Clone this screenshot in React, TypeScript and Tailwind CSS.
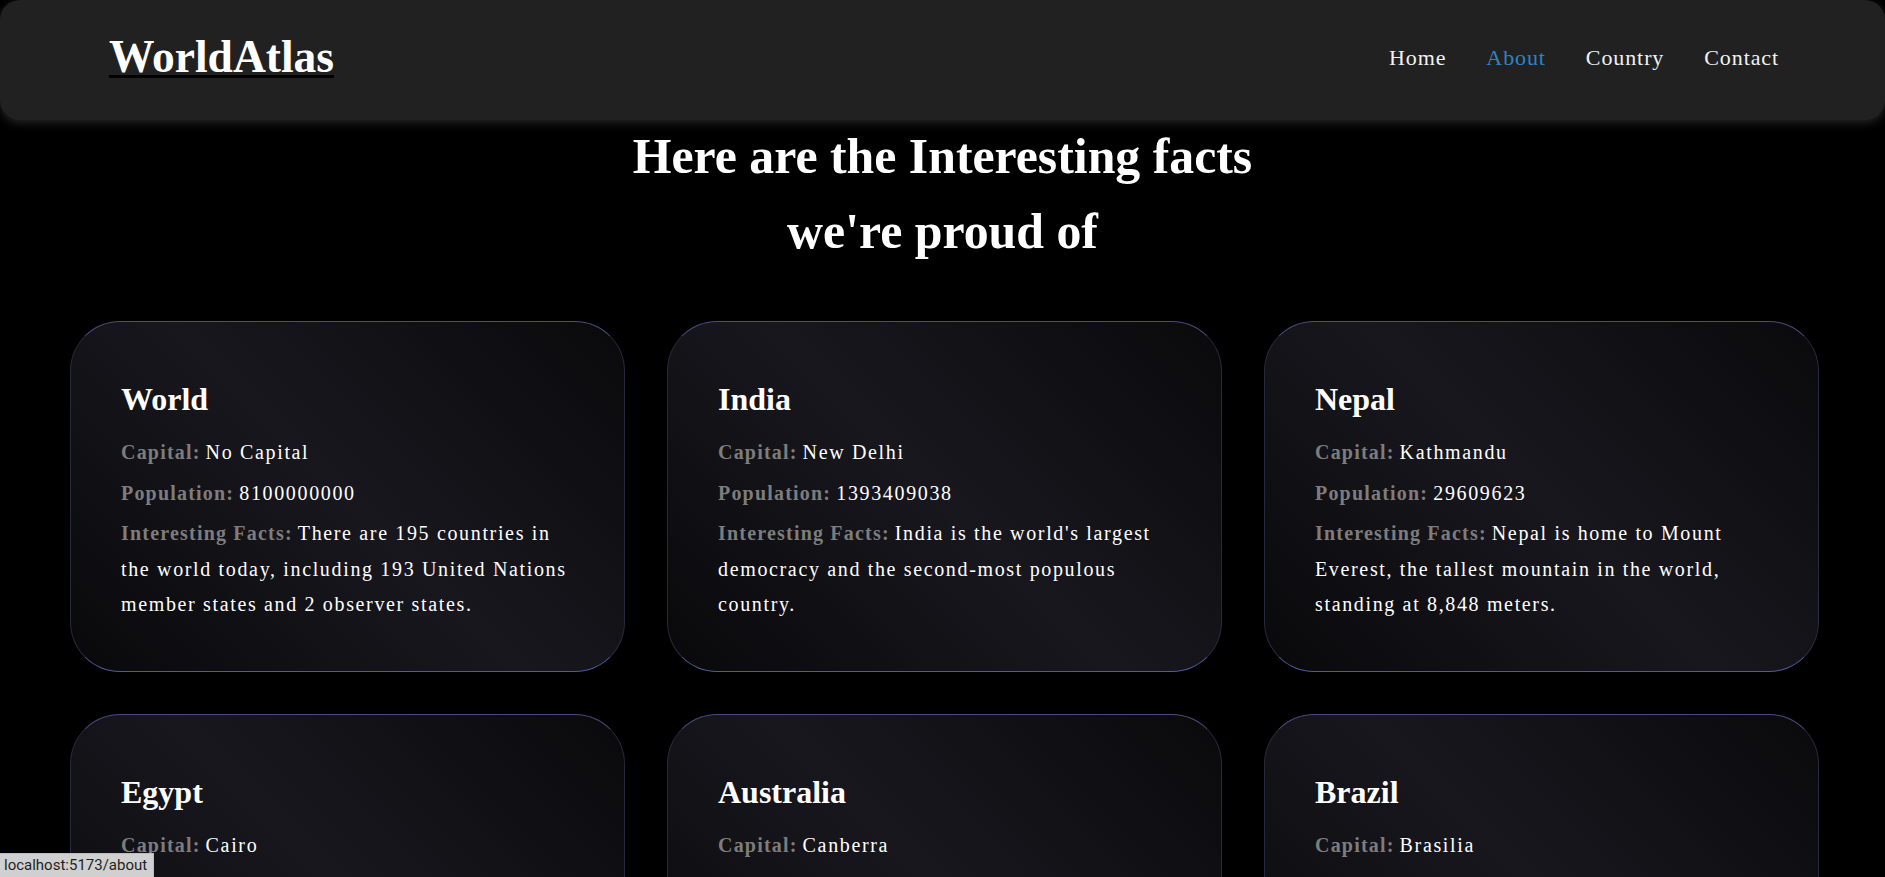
import React from "react";

interface Country {
  name: string;
  capital: string;
  population: string;
  facts: string;
}

const countries: Country[] = [
  {
    name: "World",
    capital: "No Capital",
    population: "8100000000",
    facts:
      "There are 195 countries in the world today, including 193 United Nations member states and 2 observer states.",
  },
  {
    name: "India",
    capital: "New Delhi",
    population: "1393409038",
    facts: "India is the world's largest democracy and the second-most populous country.",
  },
  {
    name: "Nepal",
    capital: "Kathmandu",
    population: "29609623",
    facts: "Nepal is home to Mount Everest, the tallest mountain in the world, standing at 8,848 meters.",
  },
  {
    name: "Egypt",
    capital: "Cairo",
    population: "104258327",
    facts: "Egypt is home to the Great Pyramid of Giza, the only surviving wonder of the ancient world.",
  },
  {
    name: "Australia",
    capital: "Canberra",
    population: "25687041",
    facts: "Australia is the only continent that is also a single country, covered mostly by desert.",
  },
  {
    name: "Brazil",
    capital: "Brasilia",
    population: "213993437",
    facts: "Brazil holds the largest share of the Amazon rainforest, the biggest tropical forest on Earth.",
  },
];

const navLinks = ["Home", "About", "Country", "Contact"];

const Header = () => (
  <header className="h-[120px] bg-[#212121] rounded-[20px] shadow-[0_3px_10px_rgba(255,255,255,0.14)] flex items-center justify-between pl-[109px] pr-[106px] pb-[5px]">
    {/* Logo */}
    <a href="#" className="text-black underline decoration-black decoration-[3px] underline-offset-[3px]">
      <span className="text-white text-[45.5px] font-bold leading-[1.15]">WorldAtlas</span>
    </a>

    {/* Nav */}
    <nav>
      <ul className="flex items-center gap-[40px]">
        {navLinks.map((link) => (
          <li key={link}>
            <a
              href="#"
              className={`text-[22px] tracking-[0.9px] ${
                link === "About" ? "text-[#2d84c3]" : "text-[#f2f2f2]"
              }`}
            >
              {link}
            </a>
          </li>
        ))}
      </ul>
    </nav>
  </header>
);

const CountryCard = ({ country }: { country: Country }) => (
  <div className="rounded-[50px] border border-t-[#464d80] border-b-[#4f5b9e] border-l-[#272a3c] border-r-[#272a3c] bg-[linear-gradient(45deg,#09090b_0%,#18171e_50%,#0a0a0c_100%)] pl-[50px] pr-[52px] pt-[53px] pb-[48px]">
    <h2 className="text-white text-[32px] font-bold leading-[48px] mb-[12px]">{country.name}</h2>
    <p className="leading-[35.5px] text-[20px]">
      <span className="font-bold text-[#7d7d7d] tracking-[1.2px]">Capital:</span>{" "}
      <span className="text-white tracking-[1.65px]">{country.capital}</span>
    </p>
    <p className="leading-[35.5px] text-[20px] mt-[5px]">
      <span className="font-bold text-[#7d7d7d] tracking-[1.2px]">Population:</span>{" "}
      <span className="text-white tracking-[1.65px]">{country.population}</span>
    </p>
    <p className="leading-[35.5px] text-[20px] mt-[5px]">
      <span className="font-bold text-[#7d7d7d] tracking-[1.2px]">Interesting Facts:</span>{" "}
      <span className="text-white tracking-[1.65px]">{country.facts}</span>
    </p>
  </div>
);

const App = () => {
  return (
    <div className="min-h-screen bg-black font-['Liberation_Serif','Times_New_Roman',serif]">
      <Header />

      <main>
        {/* Heading */}
        <h1 className="text-white text-center text-[49.8px] font-bold leading-[75px] -mt-px">
          Here are the Interesting facts
          <br />
          we're proud of
        </h1>

        {/* Cards */}
        <section className="grid grid-cols-3 gap-[42px] pl-[70px] pr-[66px] mt-[52px] pb-[60px]">
          {countries.map((country) => (
            <CountryCard key={country.name} country={country} />
          ))}
        </section>
      </main>

      {/* Browser link status */}
      <div className="fixed bottom-0 left-0 h-[24px] w-[154px] bg-[#d0d0d0] border-t border-r border-[#bdbdbd] flex items-center pl-[4px] text-[#1f1f1f] text-[15px] font-['Roboto',sans-serif]">
        localhost:5173/about
      </div>
    </div>
  );
};

export default App;
